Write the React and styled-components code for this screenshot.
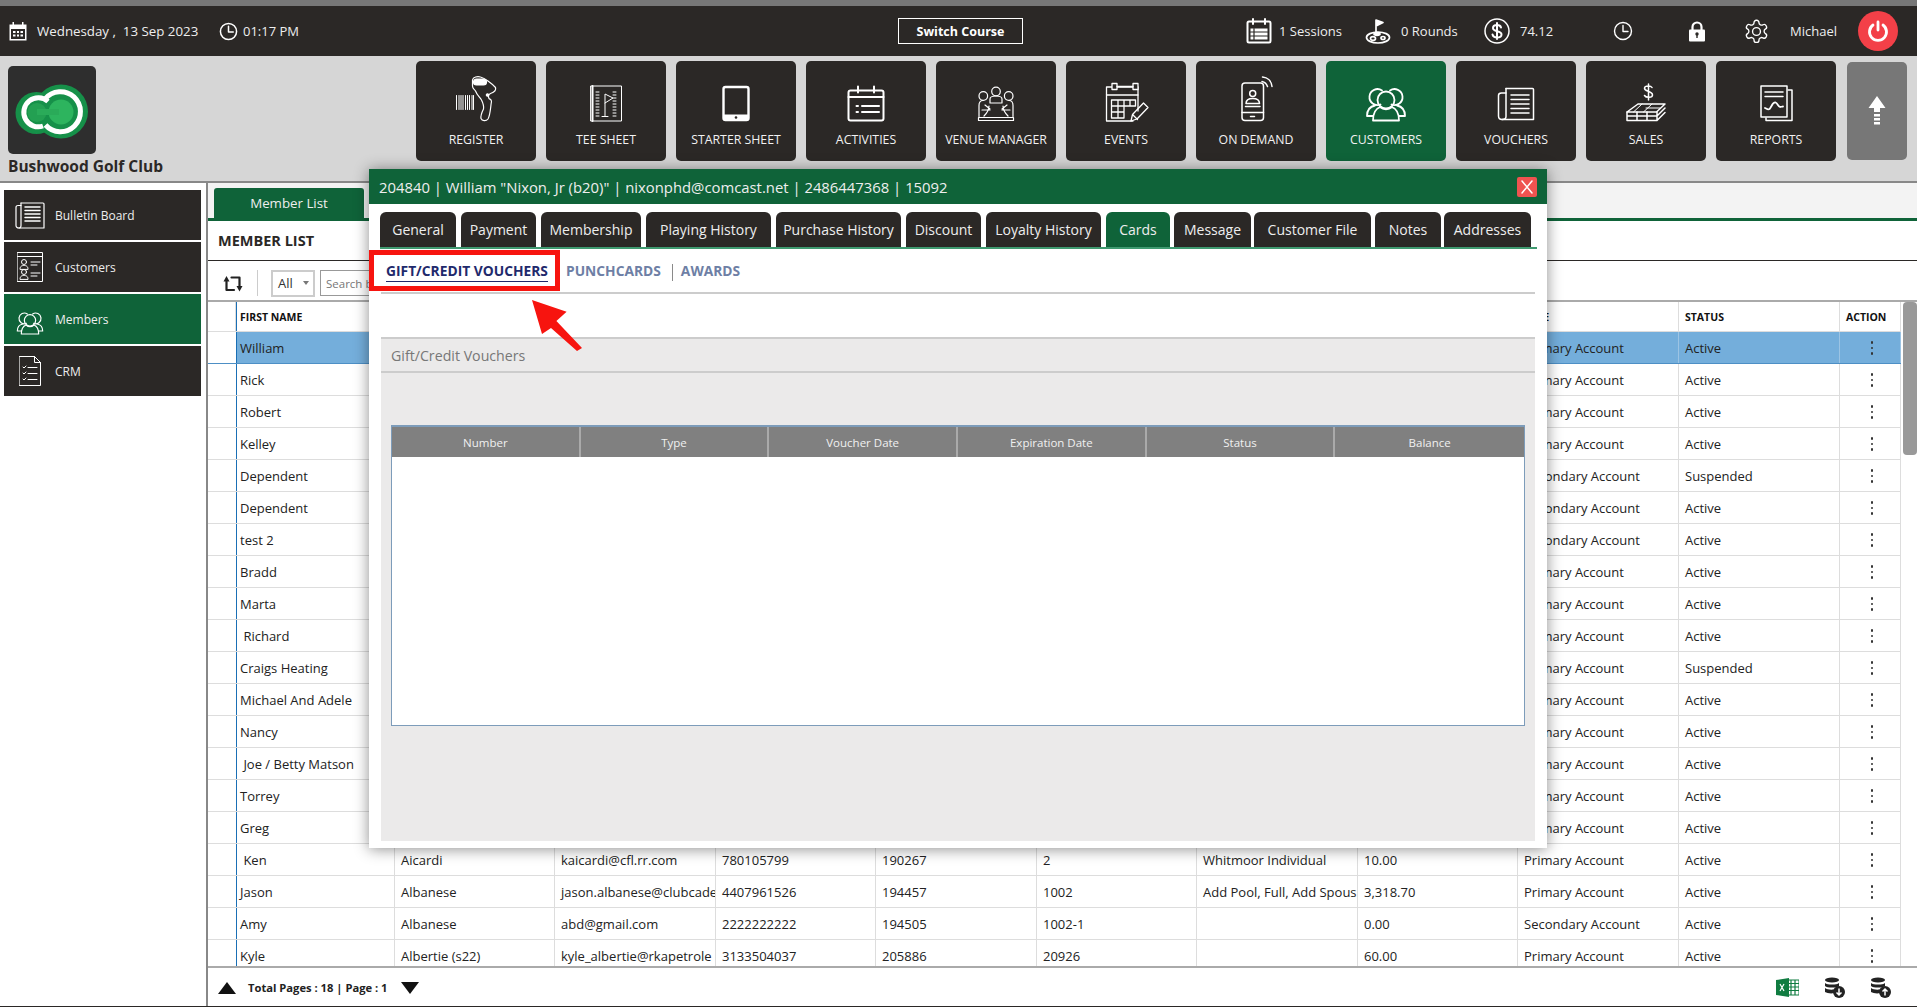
import React from 'react';
import styled, { createGlobalStyle } from 'styled-components';

const GlobalStyle = createGlobalStyle`
  html, body { margin: 0; padding: 0; background: #fff; }
  body { font-family: "Open Sans", "Liberation Sans", sans-serif; color: #222; }
  * { box-sizing: border-box; }
`;

const Page = styled.div`
  position: relative;
  width: 1917px;
  height: 1007px;
  overflow: hidden;
  background: #fff;
  border-top: 6px solid #777;
  display: flex;
  flex-direction: column;
`;

const TopBar = styled.header`
  height: 50px;
  flex: none;
  background: #2b2826;
  color: #eee;
  display: grid;
  grid-template-columns: 898px 125px 1fr;
  align-items: center;
  font-size: 13px;
`;

const TopGroup = styled.div`
  display: flex;
  align-items: center;
  padding-left: ${(p) => p.$pl || 0}px;
`;

const Stat = styled.div`
  display: flex;
  align-items: center;
  gap: ${(p) => p.$gap ?? 7}px;
  width: ${(p) => p.$w}px;
  flex: none;
  white-space: pre;
`;

const DateText = styled.span`
  font-size: 13.3px;
`;

const SwitchButton = styled.button`
  height: 26px;
  width: 125px;
  background: transparent;
  border: 1px solid #fff;
  color: #fff;
  font: 700 12.5px "Open Sans", sans-serif;
  padding: 0;
`;

const PowerButton = styled.div`
  width: 40px;
  height: 40px;
  border-radius: 50%;
  background: #f34048;
  display: flex;
  align-items: center;
  justify-content: center;
`;

const Header = styled.div`
  height: 127px;
  flex: none;
  background: #d6d6d6;
  border-bottom: 2px solid #888;
  display: flex;
  position: relative;
`;

const Brand = styled.div`
  width: 416px;
  padding: 10px 0 0 8px;
  flex: none;
`;

const LogoBox = styled.div`
  width: 88px;
  height: 88px;
`;

const ClubName = styled.div`
  font-size: 15.5px;
  font-weight: 700;
  color: #2b2826;
  margin-top: 1px;
`;

const NavRow = styled.nav`
  display: flex;
  gap: 10px;
  padding-top: 5px;
`;

const NavButton = styled.div`
  width: 120px;
  height: 100px;
  border-radius: 5px;
  background: ${(p) => (p.$active ? '#0f6339' : '#2b2826')};
  color: #f2f2f2;
  display: flex;
  flex-direction: column;
  align-items: center;
  padding-top: 13px;
`;

const NavLabel = styled.span`
  font-size: 12.3px;
  margin-top: 9px;
  line-height: 18px;
  white-space: nowrap;
`;

const ArrowButton = styled.div`
  width: 60px;
  height: 98px;
  margin: 1px 0 0 1px;
  border-radius: 5px;
  background: #777;
  display: flex;
  align-items: center;
  justify-content: center;
`;

const Body = styled.div`
  flex: 1;
  min-height: 0;
  display: flex;
  border-bottom: 1.5px solid #2b2826;
`;

const Sidebar = styled.aside`
  width: 208px;
  flex: none;
  border-right: 2px solid #888;
  padding: 7px 0 0 4px;
  display: flex;
  flex-direction: column;
  gap: 2px;
`;

const SideItem = styled.div`
  width: 197px;
  height: 50px;
  background: ${(p) => (p.$active ? '#0f6339' : '#2b2826')};
  color: #eee;
  font-size: 12px;
  display: flex;
  align-items: center;
  gap: 10px;
  padding-left: 11px;
`;

const SideIconSlot = styled.span`
  width: 30px;
  flex: none;
  display: flex;
  justify-content: center;
`;

const Main = styled.main`
  flex: 1;
  min-width: 0;
  display: flex;
  flex-direction: column;
`;

const TabStrip = styled.div`
  height: 38px;
  flex: none;
  background: #f3f3f3;
  border-bottom: 3px solid #0f6339;
  padding: 5px 0 0 6px;
`;

const ListTab = styled.div`
  width: 150px;
  height: 30px;
  background: #0f6339;
  color: #eee;
  border-radius: 3px 3px 0 0;
  font-size: 13.3px;
  display: flex;
  align-items: center;
  justify-content: center;
`;

const ListTitle = styled.div`
  height: 40px;
  flex: none;
  border-bottom: 1.5px solid #2b2826;
  font-size: 14.5px;
  font-weight: 700;
  color: #2b2826;
  display: flex;
  align-items: center;
  padding-left: 10px;
`;

const ToolRow = styled.div`
  height: 41px;
  flex: none;
  border-bottom: 2px solid #aaa;
  display: flex;
  align-items: center;
  padding: 5px 0 0 15px;
`;

const ToolDivider = styled.span`
  width: 1px;
  height: 26px;
  background: #ccc;
  margin: 0 13px 0 13px;
`;

const SelectBox = styled.div`
  width: 44px;
  height: 27px;
  border: 2px solid #ccc;
  font-size: 13px;
  color: #333;
  display: flex;
  align-items: center;
  justify-content: space-between;
  padding: 0 4px 0 5px;
  &::after {
    content: '';
    border: 3px solid transparent;
    border-top: 4px solid #777;
    margin-top: 3px;
  }
`;

const SearchBox = styled.input`
  width: 240px;
  height: 26px;
  margin-left: 5px;
  border: 1.5px solid #999;
  background: #fff;
  padding: 0 5px;
  font: 11.5px "Open Sans", sans-serif;
  &::placeholder { color: #777; }
`;

const TableArea = styled.div`
  flex: 1;
  min-height: 0;
  display: flex;
`;

const Table = styled.div`
  width: 1693px;
  flex: none;
  overflow: hidden;
`;

const Row = styled.div`
  display: grid;
  grid-template-columns: 28px 159px 160px 161px 160px 161px 160px 161px 160px 161px 161px 61px;
  height: ${(p) => (p.$head ? 30 : 32)}px;
  background: ${(p) => (p.$selected ? '#74aedb' : '#fff')};
  border-bottom: ${(p) => (p.$selected ? '1.5px solid #4d8fc5' : '1.5px solid #ddd')};
`;

const Cell = styled.div`
  border-right: 1px solid ${(p) => (p.$selected ? '#9cc4e4' : '#ddd')};
  padding: 1px 5px 0 ${(p) => (p.$first ? 3 : 6)}px;
  font-size: 13px;
  color: #222;
  display: flex;
  align-items: center;
  white-space: pre;
  overflow: hidden;
  justify-content: ${(p) => (p.$center ? 'center' : 'flex-start')};
  ${(p) => p.$first && 'border-left: 1.5px solid #1a6fb5;'}
`;

const GutterCell = styled.div`
  background: #fff;
`;

const HeadCell = styled(Cell)`
  font-size: 10.5px;
  font-weight: 700;
  color: #111;
`;

const Dots = styled.span`
  display: flex;
  flex-direction: column;
  gap: 3px;
  margin-left: 3px;
  i {
    width: 2.5px;
    height: 2.5px;
    border-radius: 50%;
    background: #333;
  }
`;

const ScrollTrack = styled.div`
  flex: 1;
  padding-left: 2px;
`;

const ScrollThumb = styled.div`
  height: 153px;
  background: #999;
  border-radius: 4px;
`;

const FootBar = styled.div`
  height: 40px;
  flex: none;
  border-top: 2px solid #aaa;
  display: flex;
  align-items: center;
  padding: 1px 26px 0 10px;
  font-size: 11.2px;
  font-weight: 700;
  color: #222;
`;

const PageTri = styled.span`
  width: 0;
  height: 0;
  border-left: 9px solid transparent;
  border-right: 9px solid transparent;
  ${(p) => (p.$down ? 'border-top: 12px solid #111;' : 'border-bottom: 12px solid #111;')}
`;

const PageText = styled.span`
  margin: 0 13px 0 12px;
`;

const FootIcons = styled.div`
  margin-left: auto;
  display: flex;
  align-items: center;
  gap: 25px;
`;

const Modal = styled.section`
  position: absolute;
  left: 369px;
  top: 163px;
  width: 1178px;
  height: 679px;
  background: #fff;
  box-shadow: 0 1px 14px rgba(0, 0, 0, 0.45);
  display: flex;
  flex-direction: column;
`;

const ModalHead = styled.div`
  height: 35px;
  flex: none;
  background: #0f6339;
  color: #eee;
  font-size: 14.85px;
  display: flex;
  align-items: center;
  justify-content: space-between;
  padding: 0 10px 0 10px;
`;

const CloseButton = styled.div`
  width: 20px;
  height: 20px;
  background: #ef5350;
  border-radius: 2px;
  display: flex;
  align-items: center;
  justify-content: center;
`;

const ModalTabs = styled.div`
  height: 37px;
  margin: 8px 10px 0 11px;
  flex: none;
  display: flex;
  border-bottom: 2px solid #3f9a70;
`;

const ModalTab = styled.div`
  width: ${(p) => p.$w}px;
  margin-left: ${(p) => p.$ml}px;
  height: 35px;
  flex: none;
  border-radius: 6px 6px 0 0;
  background: ${(p) => (p.$active ? '#0f6339' : '#2b2826')};
  color: #eee;
  font-size: 14px;
  display: flex;
  align-items: center;
  justify-content: center;
  white-space: nowrap;
`;

const SubTabs = styled.div`
  height: 45px;
  flex: none;
  margin: 0 12px;
  border-bottom: 2px solid #ccc;
  display: flex;
  align-items: center;
  font-size: 13.8px;
  font-weight: 700;
  color: #6e7fa5;
  padding-left: 5px;
`;

const SubTab = styled.span`
  margin-right: ${(p) => p.$mr}px;
  padding-bottom: ${(p) => (p.$active ? 1 : 0)}px;
  color: ${(p) => (p.$active ? '#1f2a6c' : '#6e7fa5')};
  border-bottom: ${(p) => (p.$active ? '1.5px solid #1f2a6c' : 'none')};
  margin-top: ${(p) => (p.$active ? 2 : 0)}px;
`;

const SubDivider = styled.span`
  width: 1px;
  height: 17px;
  background: #8a8a8a;
  margin-right: 8px;
  margin-top: 3px;
`;

const VoucherPanel = styled.div`
  margin: 43px 12px 7px;
  flex: 1;
  min-height: 0;
  background: #ebeaea;
  border-top: 2px solid #ccc;
`;

const PanelTitle = styled.div`
  height: 34px;
  border-bottom: 2px solid #ccc;
  color: #777;
  font-size: 14.2px;
  display: flex;
  align-items: center;
  padding-left: 10px;
`;

const VoucherTable = styled.div`
  margin: 52px 10px 0;
  height: 301px;
  width: 1134px;
  background: #fff;
  border: 1px solid #7d9cba;
  border-top-width: 2px;
`;

const VoucherHead = styled.div`
  display: grid;
  grid-template-columns: repeat(6, 1fr);
  height: 30px;
  background: #808080;
`;

const VoucherCol = styled.div`
  color: #f0f0f0;
  font-size: 11.5px;
  display: flex;
  align-items: center;
  justify-content: center;
  border-right: 2px solid #aaa;
  &:last-child { border-right: 0; }
`;

const Highlight = styled.div`
  position: absolute;
  left: 0;
  top: 81px;
  width: 191px;
  height: 41px;
  border: 5px solid #f7140f;
  pointer-events: none;
`;

const Pointer = styled.svg`
  position: absolute;
  left: 160px;
  top: 128px;
`;

const Line = styled.svg`
  display: block;
  flex: none;
  fill: none;
  stroke: ${(p) => p.$c || '#fff'};
  stroke-width: ${(p) => p.$sw || 1.2};
  stroke-linecap: round;
  stroke-linejoin: round;
`;

// nav icons, all on the same 48 box
const RegisterIcon = () => (
  <Line width="48" height="48" viewBox="0 0 48 48">
    <path d="M20.500 6c.5-3 5-4 8-3 4 1 11 6 15 10.500 1 3-2 5-5 6-2 1-2.500 3-1.500 5 1 1 2.500.5 2.500 3-1 5-1 13-3.500 17.500-2 2.500-6 2-7-.5-.5-3 1-6.500 2.500-9.500.5-3-.5-6-2-9-2-3-4.500-5-6-9-1-2-3-2-3-5z" />
    <rect x="21.500" y="5" width="13" height="6" rx="3" fill="#fff" />
    <circle cx="35.500" cy="21" r="1.200" fill="#fff" />
    <path d="M4.500 21.500v14M7 21.500v14M9 21.500v14M11 21.500v14M13.500 21.500v14M15.500 21.500v14M17.500 21.500v14M20 21.500v14M21.500 21.500v14" strokeWidth="1" />
  </Line>
);
const TeeSheetIcon = () => (
  <Line width="48" height="48" viewBox="0 0 48 48" $sw="1">
    <rect x="9" y="12" width="30.500" height="35" />
    <path d="M10.500 12v35" strokeWidth="2" />
    <path d="M14 18h3M14 21h3M14 24h3M14 27h3M14 30h3M14 33h3M14 36h3M14 39h3M14 42h3M31 18h3M31 21h3M31 24h3M31 27h3M31 30h3M31 33h3M31 36h3M31 39h3M31 42h3" />
    <path d="M23 42V20l8 4-8 5M20 42.500h6" />
  </Line>
);
const StarterIcon = () => (
  <Line width="48" height="48" viewBox="0 0 48 48" $sw="2.400">
    <rect x="11.500" y="13" width="25" height="33" rx="2" />
    <path d="M11.500 40.500h25v4a2 2 0 0 1-2 2h-21a2 2 0 0 1-2-2z" fill="#fff" stroke="none" />
    <circle cx="24" cy="43.500" r="1.300" fill="#2b2826" stroke="none" />
  </Line>
);
const ActivitiesIcon = () => (
  <Line width="48" height="48" viewBox="0 0 48 48" $sw="2">
    <rect x="6.500" y="16.500" width="35" height="30" rx="2" />
    <path d="M6.500 23h35M16 12.500v6M32 12.500v6M14.500 32h1.500M14.500 38h1.500M20 32h17M20 38h17" />
  </Line>
);
const VenueIcon = () => (
  <Line width="48" height="48" viewBox="0 0 48 48" $sw="1.200">
    <circle cx="24" cy="17.500" r="4.300" />
    <circle cx="11.300" cy="22" r="4.300" />
    <circle cx="36.700" cy="22" r="4.300" />
    <path d="M18 29v-4c0-3 3-3 6-3s6 0 6 3v4M18 29h12" />
    <path d="M11 26.500c-3 0-4 2-4 5v11M37 26.500c3 0 4 2 4 5v11M13 31l5 4M35 31l-5 4M10 36h8M38 36h-8M12 42c3-3 5-7 5-10M36 42c-3-3-5-7-5-10" />
    <rect x="6.500" y="43.500" width="35" height="3" />
  </Line>
);
const EventsIcon = () => (
  <Line width="48" height="48" viewBox="0 0 48 48" $sw="1.300">
    <path d="M31 47H4.500V13H36v24" />
    <rect x="10" y="9.500" width="5" height="6" fill="#2b2826" />
    <rect x="31" y="9.500" width="5" height="6" fill="#2b2826" />
    <path d="M4.500 21H36M15 12.500h16" />
    <path d="M9.500 26h24v6h-24zM9.500 32h12.500v12H9.500zM16 26v18M9.500 38h12.500M22 26v6M28 26v6" />
    <path d="M29 47l1.500-6.500 11-11.500 4.500 4.500-11 11.500zM30.500 40.500l5 5" />
  </Line>
);
const OnDemandIcon = () => (
  <Line width="48" height="48" viewBox="0 0 48 48" $sw="1.500">
    <rect x="10" y="9" width="21.500" height="37.500" rx="3" />
    <path d="M10 38.500h21.500M18.500 42.500h4" />
    <circle cx="20.700" cy="19.500" r="3" />
    <path d="M14 29.500c0-3.500 3-5 6.700-5s6.800 1.500 6.800 5zM13.500 32.500h14.500" />
    <path d="M30 7.500c3 .5 4.500 2 5.500 5M30.500 3c5 .5 9 4 9.500 9.500" />
  </Line>
);
const CustomersIcon = ({ size = 48 }) => (
  <Line width={size} height={size} viewBox="0 0 48 48" $sw="1.800">
    <path d="M13 31.500c-5 1-8 4-8 10.500h6" />
    <path d="M35 31.500c5 1 8 4 8 10.500h-6" />
    <path d="M18.500 30.500a8 8 0 1 1 1.500-14M29.500 30.500a8 8 0 1 0-1.500-14" />
    <circle cx="24" cy="26" r="8.500" />
    <path d="M18 33c-5 2-7 6-7 13.500h26c0-7.500-2-11.500-7-13.500-3.500 3-8.500 3-12 0z" />
  </Line>
);
const VouchersIcon = () => (
  <Line width="48" height="48" viewBox="0 0 48 48" $sw="1.500">
    <path d="M14 14.500h26.500a1 1 0 0 1 1 1V45.500H10c-2.500 0-3.500-1.500-3.500-3.500V21.500c0-1.500 1-2.500 3-2.500H14" />
    <path d="M14 14.500v28c0 2-1.500 3-4 3" />
    <path d="M19 21h18M19 25.500h18M19 30h18M19 34.500h18M19 39h18" />
  </Line>
);
const SalesIcon = () => (
  <Line width="48" height="48" viewBox="0 0 48 48" $sw="1.500">
    <path d="M30 13.500c-1-2-7-2.500-7.500.5-.5 4 8 2.500 8 7 0 3-6.500 3-8 .5M26.500 10v16" />
    <path d="M16 30h27l-8.500 8H5z" />
    <path d="M20 30l-8.500 8M30 30l-8.500 8M24 34h14" strokeWidth="1" />
    <path d="M5 38v4h30l8-8M5 42v4.500h30l8-8M15 38v8M25 38v8M35 38v8" />
  </Line>
);
const ReportsIcon = () => (
  <Line width="48" height="48" viewBox="0 0 48 48" $sw="1.500">
    <rect x="9" y="12" width="26" height="31" />
    <path d="M36 16h4v30.500H14V44" />
    <path d="M13 18h18M13 22.500h18" />
    <path d="M13 34c2 1 3 2 4.500 1 2-2 3-7 6-6.500 2 .5 2.500 4 4.500 4.500 1 0 2-.5 3-.5" strokeWidth="1.800" />
  </Line>
);

const NAV = [
  ['REGISTER', RegisterIcon],
  ['TEE SHEET', TeeSheetIcon],
  ['STARTER SHEET', StarterIcon],
  ['ACTIVITIES', ActivitiesIcon],
  ['VENUE MANAGER', VenueIcon],
  ['EVENTS', EventsIcon],
  ['ON DEMAND', OnDemandIcon],
  ['CUSTOMERS', CustomersIcon],
  ['VOUCHERS', VouchersIcon],
  ['SALES', SalesIcon],
  ['REPORTS', ReportsIcon],
];

const Logo = () => (
  <svg width="88" height="88" viewBox="0 0 88 88">
    <rect width="88" height="88" rx="5" fill="#2e2e2e" />
    <circle cx="28.500" cy="47" r="21" fill="#169049" />
    <circle cx="53" cy="45.500" r="27" fill="#169049" />
    <circle cx="29" cy="46.500" r="9.500" fill="#23a052" />
    <circle cx="53" cy="46" r="12.500" fill="#2db45e" />
    <rect x="29" y="43" width="22" height="6" fill="#2aab59" />
    <path d="M40 35.500A14.500 14.500 0 1 0 35 60" fill="none" stroke="#fff" strokeWidth="5" />
    <path d="M37 33A20 20 0 1 1 37.500 59" fill="none" stroke="#fff" strokeWidth="5" />
  </svg>
);

const DateIcon = () => (
  <svg width="20" height="20" viewBox="0 0 20 20" fill="#fff">
    <path d="M1.500 3.500h3V1h1.500v2.500h8V1h1.500v2.500h3v16h-17zM3 8v10h14V8z" />
    <path d="M5 10h2.500v2H5zM9 10h2v2H9zM12.500 10H15v2h-2.500zM5 13.500h2.500v2H5zM9 13.500h2v2H9zM12.500 13.500H15v2h-2.500z" />
  </svg>
);
const ClockIcon = ({ size = 19, sw = 1.600 }) => (
  <Line width={size} height={size} viewBox="0 0 20 20" $sw={sw}>
    <circle cx="10" cy="10" r="8.500" />
    <path d="M10 4.500V10.500h5" />
  </Line>
);
const SessionsIcon = () => (
  <Line width="26" height="26" viewBox="0 0 26 26" $sw="2">
    <rect x="1.500" y="3.500" width="23" height="21" rx="1.500" />
    <path d="M7 1v5M19 1v5" />
    <path d="M4.500 10.500h17v11h-17z" fill="#fff" stroke="none" />
    <path d="M4.500 14h17M4.500 18h17M8 10.500v11" stroke="#2b2826" strokeWidth="1.200" />
  </Line>
);
const GolfIcon = () => (
  <Line width="26" height="26" viewBox="0 0 26 26" $sw="1.700">
    <path d="M11 15V2l7 2.500-7 3.500" fill="#fff" />
    <ellipse cx="13" cy="19.500" rx="11.500" ry="5.500" />
    <ellipse cx="12" cy="16" rx="3" ry="1.300" fill="#fff" />
    <ellipse cx="8" cy="20.500" rx="2.500" ry="1.800" />
    <ellipse cx="18" cy="20" rx="2" ry="1.500" />
  </Line>
);
const DollarIcon = () => (
  <Line width="26" height="26" viewBox="0 0 26 26" $sw="1.500">
    <circle cx="13" cy="13" r="12" />
    <path d="M17 9.500c-.5-2-2-2.500-4-2.500s-4 1-4 3c0 4.500 8.500 2 8.500 6.500 0 2-2 3-4.500 3s-4-1-4.500-3M13 5v16" strokeWidth="2" />
  </Line>
);
const LockIcon = () => (
  <svg width="18" height="21" viewBox="0 0 18 21">
    <path d="M4.500 9V6a4.500 4.500 0 0 1 9 0v3" fill="none" stroke="#fff" strokeWidth="2.200" />
    <rect x="1" y="8.500" width="16" height="12" rx="1" fill="#fff" />
    <circle cx="9" cy="13" r="1.700" fill="#2b2826" />
    <rect x="8.300" y="13" width="1.400" height="4" fill="#2b2826" />
  </svg>
);
const GearIcon = () => (
  <Line width="27" height="27" viewBox="0 0 24 24" $sw="1.200">
    <circle cx="12" cy="12" r="3.500" />
    <path d="M12.200 2h-.4a2 2 0 0 0-2 2v.2a2 2 0 0 1-1 1.700l-.4.200a2 2 0 0 1-2 0l-.2-.1a2 2 0 0 0-2.700.7l-.2.400a2 2 0 0 0 .7 2.700l.2.100a2 2 0 0 1 1 1.700v.5a2 2 0 0 1-1 1.700l-.2.100a2 2 0 0 0-.7 2.700l.2.400a2 2 0 0 0 2.700.7l.2-.1a2 2 0 0 1 2 0l.4.200a2 2 0 0 1 1 1.700v.2a2 2 0 0 0 2 2h.4a2 2 0 0 0 2-2v-.2a2 2 0 0 1 1-1.700l.4-.2a2 2 0 0 1 2 0l.2.100a2 2 0 0 0 2.700-.7l.2-.4a2 2 0 0 0-.7-2.700l-.2-.1a2 2 0 0 1-1-1.700v-.5a2 2 0 0 1 1-1.700l.2-.1a2 2 0 0 0 .7-2.700l-.2-.4a2 2 0 0 0-2.700-.7l-.2.100a2 2 0 0 1-2 0l-.4-.2a2 2 0 0 1-1-1.700V4a2 2 0 0 0-2-2z" />
  </Line>
);
const PowerIcon = () => (
  <Line width="22" height="22" viewBox="0 0 22 22" $sw="2.800">
    <path d="M11 2v8M6 5a8.500 8.500 0 1 0 10 0" />
  </Line>
);
const UpArrow = () => (
  <svg width="18" height="30" viewBox="0 0 18 30" fill="#fff">
    <path d="M9 0l8.500 12H12v4H6v-4H.5z" />
    <path d="M6 18h6v2.500H6zM6 22h6v2.500H6zM6 26h6v2.500H6z" />
  </svg>
);

const BulletinIcon = () => (
  <Line width="30" height="30" viewBox="0 0 30 30" $sw="1.200">
    <path d="M6 3h22a1 1 0 0 1 1 1v24H4c-2 0-3-1-3-2.500V7.500C1 6 2 5.500 3 5.500h3" />
    <path d="M6 3v22.500c0 1.500-1 2.500-2 2.500" />
    <path d="M10 7h15M10 10.500h15M10 14h15M10 17.500h15M10 21h15" strokeWidth="1.500" />
  </Line>
);
const CustomersCardIcon = () => (
  <Line width="26" height="30" viewBox="0 0 26 30" $sw="1">
    <rect x=".5" y=".5" width="25" height="29" />
    <path d="M.5 4.500h25" />
    <circle cx="7" cy="10" r="2.500" />
    <path d="M3 17c0-3 2-3.500 4-3.500s4 .5 4 3.500zM14 10h9M14 13h6" />
    <circle cx="7" cy="20" r="2.500" />
    <path d="M3 27c0-3 2-3.500 4-3.500s4 .5 4 3.500zM14 21h9M14 24h6" />
  </Line>
);
const CrmIcon = () => (
  <Line width="22" height="30" viewBox="0 0 22 30" $sw="1">
    <path d="M.5.500h15l6 6v23H.5zM15.500.500v6h6" />
    <path d="M4 11l1 1 2-2M4 17l1 1 2-2M4 23l1 1 2-2M9 11.500h9M9 17.500h9M9 23.500h9" />
  </Line>
);

const RefreshIcon = () => (
  <Line width="21" height="19" viewBox="0 0 21 19" $c="#222" $sw="2.200">
    <path d="M8.500 3.500H16.500V12M3.500 7.500V16H11" />
    <path d="M.5 7.500L3.500 2l3 5.500zM13.500 12h6l-3 5.500z" fill="#222" stroke="none" />
  </Line>
);

const ExcelIcon = () => (
  <svg width="23" height="19" viewBox="0 0 23 19">
    <rect x="9" y="2" width="14" height="15" fill="#fff" stroke="#107c41" />
    <path d="M11 2v15M15 2v15M19 2v15M9 5.500h14M9 9h14M9 12.500h14" stroke="#107c41" strokeWidth="1.200" />
    <path d="M0 2l13-2v19L0 17z" fill="#107c41" />
    <path d="M4 6l4 7M8 6l-4 7" stroke="#fff" strokeWidth="1.200" />
  </svg>
);
const DbIcon = ({ up }) => (
  <svg width="21" height="21" viewBox="0 0 21 21">
    <ellipse cx="8" cy="3" rx="7" ry="2.500" fill="#222" />
    <path d="M1 6c2 2 12 2 14 0v3c-2 2-12 2-14 0zM1 11c2 2 9 2 10 1l-1 4c-3 1-7 0-9-1z" fill="#222" />
    <circle cx="15" cy="15" r="6" fill="#222" />
    <path d={up ? 'M15 18.500v-6M12.500 14.500l2.500-2.500 2.500 2.500' : 'M15 11.500v6M12.500 15.500l2.500 2.500 2.500-2.500'} stroke="#fff" strokeWidth="1.500" fill="none" />
  </svg>
);

const P = 'Primary Account';
const S = 'Secondary Account';
const MEMBERS = [
  ['William', P, 'Active'],
  ['Rick', P, 'Active'],
  ['Robert', P, 'Active'],
  ['Kelley', P, 'Active'],
  ['Dependent', S, 'Suspended'],
  ['Dependent', S, 'Active'],
  ['test 2', S, 'Active'],
  ['Bradd', P, 'Active'],
  ['Marta', P, 'Active'],
  [' Richard', P, 'Active'],
  ['Craigs Heating', P, 'Suspended'],
  ['Michael And Adele', P, 'Active'],
  ['Nancy', P, 'Active'],
  [' Joe / Betty Matson', P, 'Active'],
  ['Torrey', P, 'Active'],
  ['Greg', P, 'Active'],
  [' Ken', P, 'Active', 'Aicardi', 'kaicardi@cfl.rr.com', '780105799', '190267', '2', 'Whitmoor Individual', '10.00'],
  ['Jason', P, 'Active', 'Albanese', 'jason.albanese@clubcade', '4407961526', '194457', '1002', 'Add Pool, Full, Add Spous', '3,318.70'],
  ['Amy', S, 'Active', 'Albanese', 'abd@gmail.com', '2222222222', '194505', '1002-1', '', '0.00'],
  ['Kyle', P, 'Active', 'Albertie (s22)', 'kyle_albertie@rkapetrole', '3133504037', '205886', '20926', '', '60.00'],
];

const MODAL_TABS = [
  ['General', 76, 0],
  ['Payment', 75, 5],
  ['Membership', 100, 5],
  ['Playing History', 125, 5],
  ['Purchase History', 125, 5],
  ['Discount', 75, 5],
  ['Loyalty History', 115, 5],
  ['Cards', 64, 5],
  ['Message', 77, 4],
  ['Customer File', 117, 3],
  ['Notes', 66, 4],
  ['Addresses', 87, 3],
];

const VOUCHER_COLS = ['Number', 'Type', 'Voucher Date', 'Expiration Date', 'Status', 'Balance'];

const App = () => (
  <Page>
    <GlobalStyle />
    <TopBar>
      <TopGroup $pl={8}>
        <Stat $w={211} $gap={9}>
          <DateIcon />
          <DateText>Wednesday ,  13 Sep 2023</DateText>
        </Stat>
        <Stat $w={100} $gap={5}>
          <ClockIcon />
          <span>01:17 PM</span>
        </Stat>
      </TopGroup>
      <SwitchButton>Switch Course</SwitchButton>
      <TopGroup $pl={223}>
        <Stat $w={119}><SessionsIcon /><span>1 Sessions</span></Stat>
        <Stat $w={119} $gap={10}><GolfIcon /><span>0 Rounds</span></Stat>
        <Stat $w={129} $gap={10}><DollarIcon /><span>74.12</span></Stat>
        <Stat $w={75}><ClockIcon size={20} sw={1.400} /></Stat>
        <Stat $w={55}><LockIcon /></Stat>
        <Stat $w={47}><GearIcon /></Stat>
        <Stat $w={68}><span>Michael</span></Stat>
        <PowerButton><PowerIcon /></PowerButton>
      </TopGroup>
    </TopBar>

    <Header>
      <Brand>
        <LogoBox><Logo /></LogoBox>
        <ClubName>Bushwood Golf Club</ClubName>
      </Brand>
      <NavRow>
        {NAV.map(([label, Icon]) => (
          <NavButton key={label} $active={label === 'CUSTOMERS'}>
            <Icon />
            <NavLabel>{label}</NavLabel>
          </NavButton>
        ))}
        <ArrowButton><UpArrow /></ArrowButton>
      </NavRow>
    </Header>

    <Body>
      <Sidebar>
        <SideItem><SideIconSlot><BulletinIcon /></SideIconSlot>Bulletin Board</SideItem>
        <SideItem><SideIconSlot><CustomersCardIcon /></SideIconSlot>Customers</SideItem>
        <SideItem $active><SideIconSlot><CustomersIcon size={32} /></SideIconSlot>Members</SideItem>
        <SideItem><SideIconSlot><CrmIcon /></SideIconSlot>CRM</SideItem>
      </Sidebar>
      <Main>
        <TabStrip><ListTab>Member List</ListTab></TabStrip>
        <ListTitle>MEMBER LIST</ListTitle>
        <ToolRow>
          <RefreshIcon />
          <ToolDivider />
          <SelectBox>All</SelectBox>
          <SearchBox placeholder="Search by" readOnly />
        </ToolRow>
        <TableArea>
          <Table>
            <Row $head>
              <HeadCell />
              <HeadCell $first>FIRST NAME</HeadCell>
              <HeadCell />
              <HeadCell />
              <HeadCell />
              <HeadCell />
              <HeadCell />
              <HeadCell />
              <HeadCell />
              <HeadCell>TYPE</HeadCell>
              <HeadCell>STATUS</HeadCell>
              <HeadCell>ACTION</HeadCell>
            </Row>
            {MEMBERS.map(([first, type, status, last, email, phone, id, num, plan, bal], i) => (
              <Row key={i} $selected={i === 0}>
                <GutterCell />
                <Cell $first $selected={i === 0}>{first}</Cell>
                <Cell $selected={i === 0}>{last}</Cell>
                <Cell $selected={i === 0}>{email}</Cell>
                <Cell $selected={i === 0}>{phone}</Cell>
                <Cell $selected={i === 0}>{id}</Cell>
                <Cell $selected={i === 0}>{num}</Cell>
                <Cell $selected={i === 0}>{plan}</Cell>
                <Cell $selected={i === 0}>{bal}</Cell>
                <Cell $selected={i === 0}>{type}</Cell>
                <Cell $selected={i === 0}>{status}</Cell>
                <Cell $center $selected={i === 0}><Dots><i /><i /><i /></Dots></Cell>
              </Row>
            ))}
          </Table>
          <ScrollTrack><ScrollThumb /></ScrollTrack>
        </TableArea>
        <FootBar>
          <PageTri />
          <PageText>Total Pages : 18 | Page : 1</PageText>
          <PageTri $down />
          <FootIcons>
            <ExcelIcon />
            <DbIcon />
            <DbIcon up />
          </FootIcons>
        </FootBar>
      </Main>
    </Body>

    <Modal>
      <ModalHead>
        <span>204840 | William "Nixon, Jr (b20)" | nixonphd@comcast.net | 2486447368 | 15092</span>
        <CloseButton>
          <Line width="12" height="14" viewBox="0 0 12 14" $sw="1.500"><path d="M1 1l10 12M11 1L1 13" /></Line>
        </CloseButton>
      </ModalHead>
      <ModalTabs>
        {MODAL_TABS.map(([label, w, ml]) => (
          <ModalTab key={label} $w={w} $ml={ml} $active={label === 'Cards'}>{label}</ModalTab>
        ))}
      </ModalTabs>
      <SubTabs>
        <SubTab $active $mr={18}>GIFT/CREDIT VOUCHERS</SubTab>
        <SubTab $mr={11}>PUNCHCARDS</SubTab>
        <SubDivider />
        <SubTab>AWARDS</SubTab>
      </SubTabs>
      <VoucherPanel>
        <PanelTitle>Gift/Credit Vouchers</PanelTitle>
        <VoucherTable>
          <VoucherHead>
            {VOUCHER_COLS.map((c) => <VoucherCol key={c}>{c}</VoucherCol>)}
          </VoucherHead>
        </VoucherTable>
      </VoucherPanel>
      <Highlight />
      <Pointer width="56" height="58" viewBox="0 0 56 58">
        <path d="M3 3L37.600 14.700 27.400 24 53 51 48 54 22 31 13 37z" fill="#f7140f" />
      </Pointer>
    </Modal>
  </Page>
);

export default App;
